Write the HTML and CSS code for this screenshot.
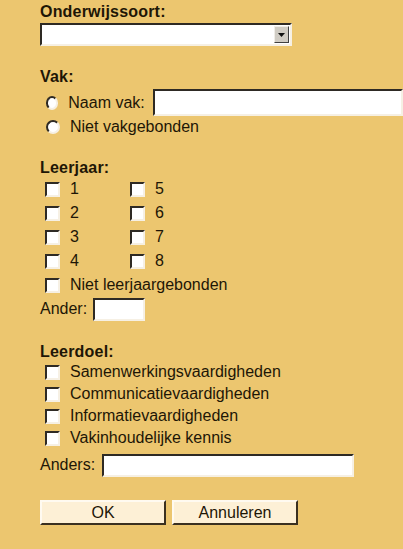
FILE: index.html
```html
<!DOCTYPE html>
<html lang="nl">
<head>
    <meta charset="UTF-8">
    <meta name="viewport" content="width=device-width, initial-scale=1.0">
    <title>Lesmateriaal zoeken</title>
    <link rel="stylesheet" href="styles.css">
</head>
<body>
    <form class="panel" id="zoekForm">
        <div class="group">
            <label class="heading" for="soort">Onderwijssoort:</label>
            <div class="select-box">
                <select id="soort" name="soort"></select>
                <span class="arrow">
                    <svg width="7" height="4" viewBox="0 0 7 4"><path d="M0 0h7L3.5 4z" fill="#111"/></svg>
                </span>
            </div>
        </div>

        <div class="group vak">
            <div class="heading">Vak:</div>
            <label class="option tall">
                <input type="radio" name="vak" value="naam"> Naam vak:
                <input type="text" class="text vak-naam" name="vaknaam">
            </label>
            <label class="option">
                <input type="radio" name="vak" value="geen"> Niet vakgebonden
            </label>
        </div>

        <div class="group leerjaar">
            <div class="heading">Leerjaar:</div>
            <div class="years">
                <label class="option"><input type="checkbox" name="jaar" value="1"> 1</label>
                <label class="option"><input type="checkbox" name="jaar" value="5"> 5</label>
                <label class="option"><input type="checkbox" name="jaar" value="2"> 2</label>
                <label class="option"><input type="checkbox" name="jaar" value="6"> 6</label>
                <label class="option"><input type="checkbox" name="jaar" value="3"> 3</label>
                <label class="option"><input type="checkbox" name="jaar" value="7"> 7</label>
                <label class="option"><input type="checkbox" name="jaar" value="4"> 4</label>
                <label class="option"><input type="checkbox" name="jaar" value="8"> 8</label>
            </div>
            <label class="option"><input type="checkbox" name="jaar" value="geen"> Niet leerjaargebonden</label>
            <label class="field">Ander: <input type="text" class="text ander" name="ander"></label>
        </div>

        <div class="group leerdoel">
            <div class="heading">Leerdoel:</div>
            <label class="option"><input type="checkbox" name="doel"> Samenwerkingsvaardigheden</label>
            <label class="option"><input type="checkbox" name="doel"> Communicatievaardigheden</label>
            <label class="option"><input type="checkbox" name="doel"> Informatievaardigheden</label>
            <label class="option"><input type="checkbox" name="doel"> Vakinhoudelijke kennis</label>
            <label class="field anders-row">Anders: <input type="text" class="text anders" name="anders"></label>
        </div>

        <div class="buttons">
            <button type="submit" class="btn">OK</button>
            <button type="button" class="btn">Annuleren</button>
        </div>
    </form>
</body>
</html>
```

FILE: styles.css
```css
/* General Styles */
body {
    margin: 0;
    padding: 0;
    background-color: #ecc66f;
    font-family: "Liberation Sans", Arial, sans-serif;
    font-size: 16px;
    color: #1e1606;
    overflow: hidden;
}

.panel {
    padding: 2px 0 0 40px;
}

.group {
    display: flex;
    flex-direction: column;
}

.heading {
    font-weight: bold;
    line-height: 19px;
    height: 19px;
    letter-spacing: 0.2px;
}

/* Select */
.select-box {
    display: flex;
    width: 252px;
    height: 23px;
    margin-top: 2px;
    box-sizing: border-box;
    border: 2px solid;
    border-color: #2e2a24 #f6f0e4 #f6f0e4 #2e2a24;
    background: #fff;
}

.select-box select {
    flex: 1;
    border: none;
    background: #fff;
    appearance: none;
    outline: none;
}

.arrow {
    width: 15px;
    margin: 1px 1px 1px 0;
    display: flex;
    align-items: center;
    justify-content: center;
    background: #d0ccc4;
    box-sizing: border-box;
    border: 1px solid;
    border-color: #f0ede8 #404040 #404040 #f0ede8;
}

/* Rows */
.option,
.field {
    display: flex;
    align-items: center;
    height: 22px;
    white-space: nowrap;
}

.option input[type="radio"],
.option input[type="checkbox"] {
    appearance: none;
    margin: 0 10px 0 5px;
    width: 15px;
    height: 15px;
    box-sizing: border-box;
    background: #fff;
    border: 2px solid;
    border-color: #2e2a24 #f6f0e4 #f6f0e4 #2e2a24;
}

.option input[type="radio"] {
    width: 14px;
    height: 14px;
    margin-left: 6px;
    border-radius: 50%;
}

.text {
    height: 23px;
    box-sizing: border-box;
    border: 2px solid;
    border-color: #2e2a24 #f6f0e4 #f6f0e4 #2e2a24;
    background: #fff;
    padding: 0 3px;
    font: inherit;
}

/* Vak */
.vak {
    margin-top: 21px;
}

.vak .heading {
    margin-bottom: 3px;
}

.option.tall {
    height: 27px;
}

.vak-naam {
    height: 27px;
    width: 300px;
    margin-left: 8px;
}

/* Leerjaar */
.leerjaar {
    margin-top: 20px;
}

.leerjaar .option,
.leerjaar .field {
    height: 24px;
}

.years {
    display: grid;
    grid-template-columns: 85px auto;
}

.ander {
    width: 52px;
    margin-left: 6px;
}

/* Leerdoel */
.leerdoel {
    margin-top: 21px;
}

.anders-row {
    height: 24px;
    margin-top: 4px;
}

.anders {
    width: 252px;
    margin-left: 7px;
}

/* Buttons */
.buttons {
    display: flex;
    gap: 6px;
    margin-top: 23px;
}

.btn {
    width: 126px;
    height: 25px;
    background-color: #fdf0d6;
    color: #1e1606;
    font-family: inherit;
    font-size: 16px;
    border: 2px solid;
    border-color: #fffaf0 #3a3020 #3a3020 #fffaf0;
    padding: 0;
    cursor: pointer;
}
```
